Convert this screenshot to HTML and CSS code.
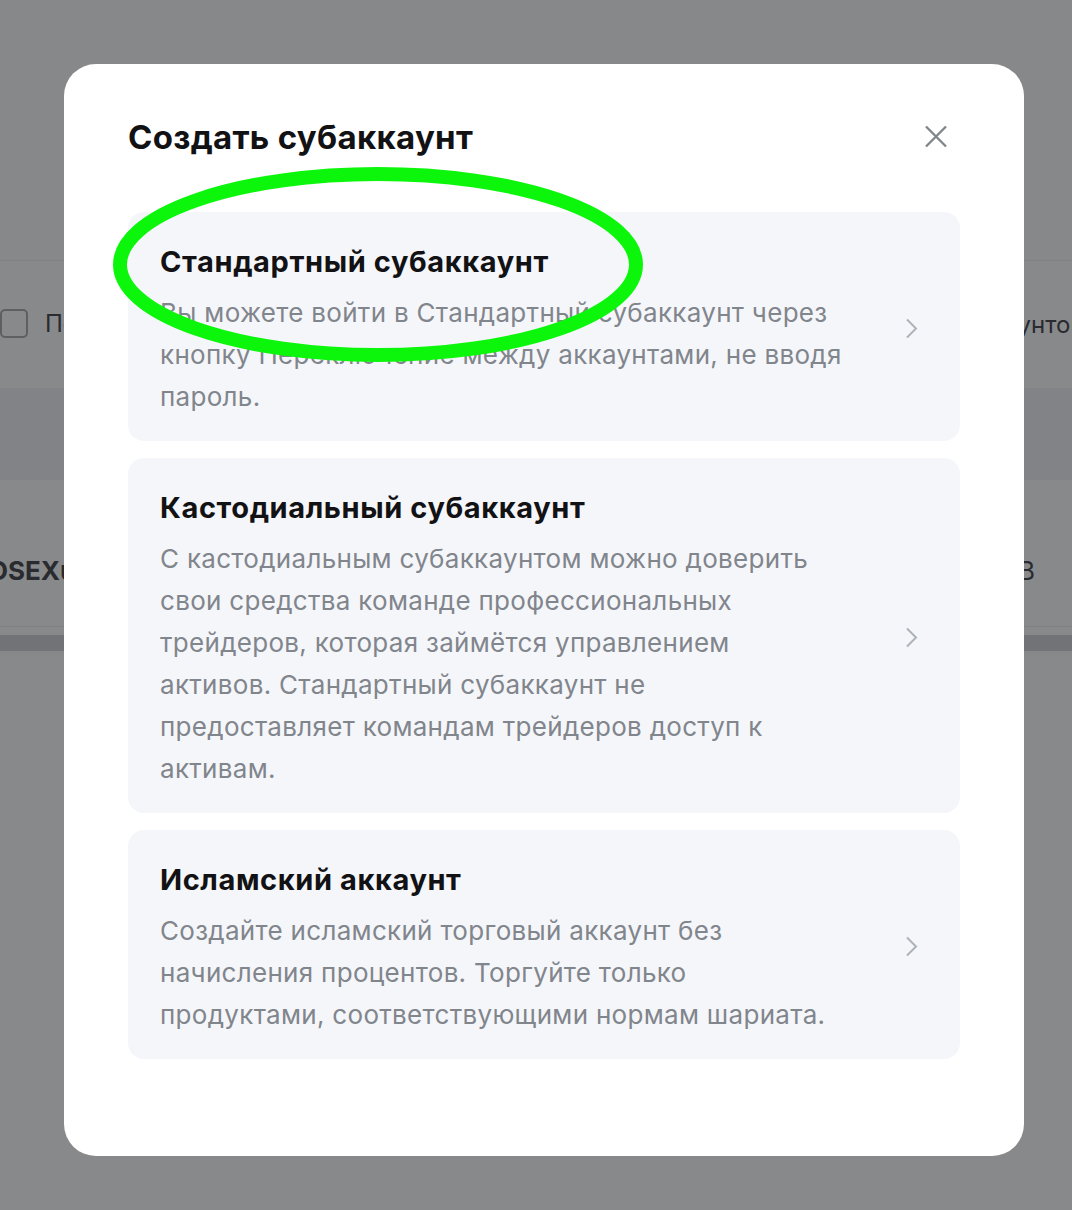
FILE: index.html
```html
<!DOCTYPE html>
<html lang="ru">
<head>
    <meta charset="UTF-8">
    <meta name="viewport" content="width=device-width, initial-scale=1.0">
    <title>Создать субаккаунт</title>
    <link rel="stylesheet" href="styles.css">
</head>
<body>
    <!-- Page behind the dialog -->
    <div class="page">
        <div class="page-top"></div>
        <div class="filter-row">
            <label class="filter-check">
                <span class="checkbox"></span>
                <span>Показать скрытые</span>
            </label>
            <span class="filter-right">Всего аккаунтов</span>
        </div>
        <div class="table-head"></div>
        <div class="table-row">
            <span class="row-name">OSEXuser</span>
            <span class="row-right">В</span>
        </div>
        <div class="table-scroll"></div>
    </div>

    <div class="overlay"></div>

    <!-- Dialog -->
    <div class="modal">
        <div class="modal-header">
            <h1>Создать субаккаунт</h1>
            <button class="close-btn" aria-label="Закрыть">
                <svg width="24" height="24" viewBox="0 0 24 24">
                    <path d="M2 1.5 L22 21.5 M22 1.5 L2 21.5" stroke="#81858c" stroke-width="2.4" fill="none"/>
                </svg>
            </button>
        </div>

        <div class="option-list">
            <div class="option">
                <div class="option-text">
                    <h2>Стандартный субаккаунт</h2>
                    <p>Вы можете войти в Стандартный субаккаунт через<br>кнопку Переключение между аккаунтами, не вводя<br>пароль.</p>
                </div>
                <svg class="chevron" width="24" height="24" viewBox="0 0 24 24">
                    <path d="M8 2.5 L17 11.5 L8 20.5" stroke="#adb1b8" stroke-width="2" fill="none"/>
                </svg>
            </div>

            <div class="option">
                <div class="option-text">
                    <h2>Кастодиальный субаккаунт</h2>
                    <p>С кастодиальным субаккаунтом можно доверить<br>свои средства команде профессиональных<br>трейдеров, которая займётся управлением<br>активов. Стандартный субаккаунт не<br>предоставляет командам трейдеров доступ к<br>активам.</p>
                </div>
                <svg class="chevron" width="24" height="24" viewBox="0 0 24 24">
                    <path d="M8 2.5 L17 11.5 L8 20.5" stroke="#adb1b8" stroke-width="2" fill="none"/>
                </svg>
            </div>

            <div class="option">
                <div class="option-text">
                    <h2>Исламский аккаунт</h2>
                    <p>Создайте исламский торговый аккаунт без<br>начисления процентов. Торгуйте только<br>продуктами, соответствующими нормам шариата.</p>
                </div>
                <svg class="chevron" width="24" height="24" viewBox="0 0 24 24">
                    <path d="M8 2.5 L17 11.5 L8 20.5" stroke="#adb1b8" stroke-width="2" fill="none"/>
                </svg>
            </div>
        </div>
    </div>

    <!-- Highlight mark drawn over the screenshot -->
    <svg class="highlight" width="560" height="220" viewBox="0 0 560 220">
        <ellipse cx="273" cy="109.5" rx="258" ry="90.5" stroke="#0cf60c" stroke-width="14" fill="none"/>
    </svg>
</body>
</html>
```

FILE: styles.css
```css
/* General Layout */
html, body {
    margin: 0;
    padding: 0;
    height: 100%;
    overflow: hidden;
}

body {
    font-family: Inter, "Noto Sans", sans-serif;
    background-color: #ffffff;
    position: relative;
}

/* Page behind the dialog */
.page {
    display: flex;
    flex-direction: column;
}

.page-top {
    height: 260px;
    background-color: #fdfdfd;
    border-bottom: 1px solid #eeeff1;
}

.filter-row {
    height: 127px;
    display: flex;
    align-items: center;
    justify-content: space-between;
    font-size: 24px;
    color: #404245;
    white-space: nowrap;
}

.filter-check {
    display: flex;
    align-items: center;
    gap: 17px;
    margin-top: -2px;
}

.checkbox {
    width: 24px;
    height: 25px;
    border: 2px solid #a9abae;
    border-radius: 5px;
}

.filter-right {
    margin-right: -12px;
}

.table-head {
    height: 92px;
    background-color: #f2f3f5;
}

.table-row {
    height: 147px;
    box-sizing: border-box;
    padding-top: 34px;
    display: flex;
    align-items: center;
    justify-content: space-between;
    font-size: 26px;
    color: #404245;
    border-bottom: 1px solid #eeeff1;
    white-space: nowrap;
}

.row-name {
    font-weight: 700;
    margin-left: -12px;
}

.row-right {
    margin-right: 37px;
}

.table-scroll {
    height: 16px;
    margin-top: 8px;
    background-color: #d2d3d6;
    border-bottom: 4px solid #fbfbfb;
}

.overlay {
    position: absolute;
    inset: 0;
    background-color: rgba(18, 20, 24, 0.5);
}

/* Dialog */
.modal {
    position: absolute;
    left: 64px;
    top: 64px;
    width: 960px;
    box-sizing: border-box;
    padding: 51px 64px 97px;
    background-color: #ffffff;
    border-radius: 32px;
}

.modal-header {
    height: 44px;
    display: flex;
    align-items: center;
    justify-content: space-between;
    margin-bottom: 53px;
}

.modal-header h1 {
    margin: 0;
    font-size: 33px;
    font-weight: 700;
    letter-spacing: 0.3px;
    color: #121214;
}

.close-btn {
    width: 24px;
    height: 24px;
    padding: 0;
    margin-right: 12px;
    border: none;
    background: none;
    cursor: pointer;
}

.close-btn svg {
    display: block;
}

/* Options */
.option-list {
    display: flex;
    flex-direction: column;
    gap: 17px;
}

.option {
    display: flex;
    align-items: center;
    gap: 16px;
    padding: 28px 37px 23px 32px;
    background-color: #f5f6fa;
    border-radius: 16px;
    cursor: pointer;
}

.option-text {
    flex: 1;
}

.option h2 {
    margin: 0 0 8px;
    font-size: 29px;
    line-height: 44px;
    font-weight: 700;
    letter-spacing: 0.6px;
    color: #121214;
}

.option p {
    margin: 0;
    font-size: 26px;
    line-height: 42px;
    letter-spacing: 0.3px;
    color: #81858c;
    white-space: nowrap;
}

.chevron {
    flex-shrink: 0;
}

/* Annotation */
.highlight {
    position: absolute;
    left: 105px;
    top: 155px;
    pointer-events: none;
}
```
